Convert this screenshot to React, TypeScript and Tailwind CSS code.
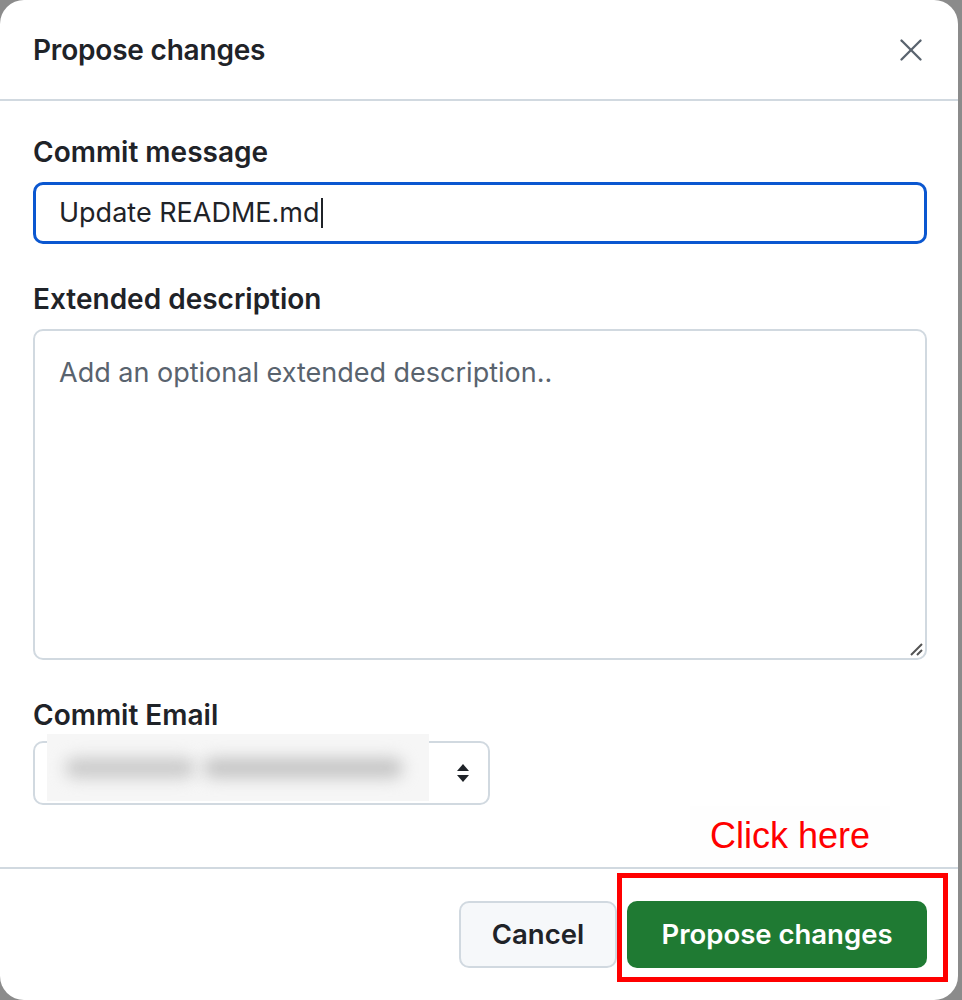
import { X } from 'lucide-react';

function SortIcon() {
  return (
    <svg width="14" height="20" viewBox="0 0 14 20" className="text-[#1f2328]">
      <path d="M7 1 L13 8 H1 Z" fill="currentColor" />
      <path d="M7 19 L13 12 H1 Z" fill="currentColor" />
    </svg>
  );
}

function Field({ label, gap, children }: { label: string; gap: string; children: React.ReactNode }) {
  return (
    <div className={`flex flex-col ${gap}`}>
      <label className="text-[28px] leading-[32px] font-semibold text-[#1f2328]">{label}</label>
      {children}
    </div>
  );
}

export default function App() {
  return (
    <div className="min-h-screen bg-[#8b8b8b] font-['Inter','Liberation_Sans',sans-serif]">
      <div className="relative w-[958px] h-[1000px] bg-white rounded-[24px] overflow-hidden flex flex-col">
        {/* header */}
        <div className="h-[101px] shrink-0 flex items-center justify-between pl-[33px] pr-[28px] border-b-2 border-[#d1d9e0]">
          <h2 className="text-[28px] font-semibold text-[#1f2328] tracking-[-0.2px]">Propose changes</h2>
          <X size={38} strokeWidth={1.5} className="text-[#59636e]" />
        </div>

        {/* body */}
        <div className="flex flex-col gap-[39px] pl-[33px] pr-[31px] pt-[35px] h-[766px] shrink-0">
          <Field label="Commit message" gap="gap-[14px]">
            <div className="h-[62px] rounded-[10px] border-[3px] border-[#0b57d0] flex items-center px-[23px]">
              <span className="text-[27px] text-[#1f2328]">Update README.md</span>
              <span className="w-[2px] h-[30px] bg-[#1f2328] ml-[1px]" />
            </div>
          </Field>

          <Field label="Extended description" gap="gap-[14px]">
            <div className="relative h-[331px] rounded-[10px] border-2 border-[#d1d9e0] px-[24px] pt-[22px]">
              <span className="text-[27px] text-[#59636e]">Add an optional extended description..</span>
              <svg width="14" height="14" viewBox="0 0 14 14" className="absolute right-[2px] bottom-[2px]">
                <path d="M2 13 L13 2 M8 13 L13 8" stroke="#555" strokeWidth="2" />
              </svg>
            </div>
          </Field>

          <Field label="Commit Email" gap="gap-[10px]">
            <div className="relative w-[457px] h-[64px] rounded-[10px] border-2 border-[#d1d9e0] flex items-center justify-end pr-[18px]">
              <SortIcon />
              <div className="absolute left-[12px] top-[-9px] w-[382px] h-[67px] bg-[#f6f6f6] flex items-center pl-[18px] gap-[8px] overflow-hidden">
                <div className="w-[130px] h-[20px] rounded-full bg-[#c9c9c9] blur-[8px]" />
                <div className="w-[200px] h-[20px] rounded-full bg-[#c4c4c4] blur-[8px]" />
              </div>
            </div>
          </Field>
        </div>

        {/* annotation */}
        <div className="absolute left-[690px] top-[806px] w-[200px] h-[60px] bg-[#fefefe] flex items-center justify-center">
          <span className="text-[36px] text-[#ff0000] font-['Liberation_Sans',Arial,sans-serif]">Click here</span>
        </div>

        {/* footer */}
        <div className="flex-1 border-t-2 border-[#d1d9e0] flex items-start justify-end gap-[10px] pt-[32px] pr-[31px]">
          <button className="w-[158px] h-[67px] rounded-[10px] border-2 border-[#d1d9e0] bg-[#f6f8fa] text-[27.5px] font-semibold text-[#1f2328]">
            Cancel
          </button>
          <div className="relative">
            <button className="w-[300px] h-[67px] rounded-[10px] bg-[#1f7a33] text-[27.5px] font-semibold text-white">
              Propose changes
            </button>
            <div className="absolute left-[-10px] top-[-28px] w-[331px] h-[109px] border-[5px] border-[#ff0000] pointer-events-none" />
          </div>
        </div>
      </div>
    </div>
  );
}
